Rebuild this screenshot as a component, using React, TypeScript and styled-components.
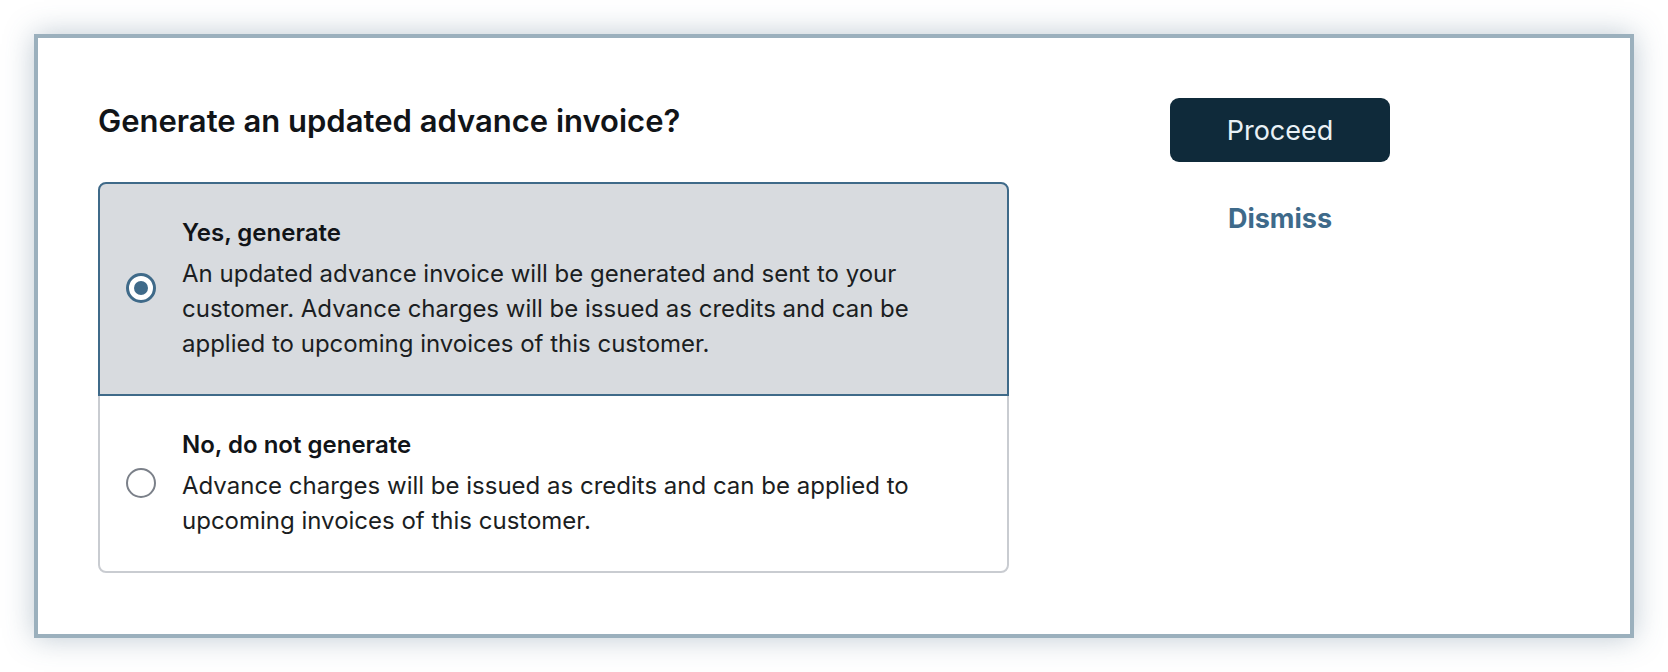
import React, { useState } from 'react';
import styled, { createGlobalStyle } from 'styled-components';

const GlobalStyle = createGlobalStyle`
  body {
    margin: 0;
    background: #ffffff;
    font-family: Inter, 'Noto Sans', sans-serif;
  }
`;

const Card = styled.div`
  margin: 34px;
  border: 4px solid #9bb0bd;
  background: #ffffff;
  box-shadow: 0 0 28px rgba(70, 100, 125, 0.35);
  padding: 60px 60px 61px 60px;
  display: flex;
  align-items: flex-start;
`;

const Main = styled.div`
  width: 911px;
`;

const Heading = styled.h2`
  margin: 0 0 38px 0;
  font-size: 31px;
  line-height: 46px;
  font-weight: 600;
  color: #111418;
`;

const Options = styled.div`
  display: flex;
  flex-direction: column;
`;

const Option = styled.label<{ $selected: boolean; $first?: boolean; $last?: boolean }>`
  position: relative;
  display: flex;
  align-items: center;
  gap: 26px;
  padding: 31px 40px 33px 26px;
  border: 2px solid ${(p) => (p.$selected ? '#3f6a89' : '#c9ccd1')};
  background: ${(p) => (p.$selected ? '#d8dbdf' : '#ffffff')};
  border-radius: ${(p) => (p.$first ? '8px 8px 0 0' : p.$last ? '0 0 8px 8px' : '0')};
  margin-top: ${(p) => (p.$first ? '0' : '-2px')};
  z-index: ${(p) => (p.$selected ? 1 : 0)};
  cursor: pointer;
`;

const Radio = styled.span<{ $checked: boolean }>`
  flex: none;
  width: 30px;
  height: 30px;
  box-sizing: border-box;
  border-radius: 50%;
  border: ${(p) => (p.$checked ? '3px solid #3f6a89' : '2px solid #7b8089')};
  background: #ffffff;
  display: flex;
  align-items: center;
  justify-content: center;
  &::after {
    content: '';
    display: ${(p) => (p.$checked ? 'block' : 'none')};
    width: 14px;
    height: 14px;
    border-radius: 50%;
    background: #3f6a89;
  }
`;

const HiddenInput = styled.input`
  position: absolute;
  opacity: 0;
  pointer-events: none;
`;

const Texts = styled.div`
  display: flex;
  flex-direction: column;
  gap: 6px;
`;

const Title = styled.div`
  font-size: 24px;
  line-height: 35px;
  font-weight: 600;
  color: #111418;
`;

const Description = styled.div`
  font-size: 24px;
  line-height: 35px;
  font-weight: 400;
  color: #1b1e22;
`;

const Actions = styled.div`
  margin-left: 161px;
  width: 220px;
  display: flex;
  flex-direction: column;
  align-items: center;
`;

const PrimaryButton = styled.button`
  width: 220px;
  height: 64px;
  border: none;
  border-radius: 9px;
  background: #0f2a3a;
  color: #e9f1f6;
  font-family: Inter, 'Noto Sans', sans-serif;
  font-size: 27px;
  font-weight: 400;
  cursor: pointer;
`;

const LinkButton = styled.button`
  margin-top: 41px;
  border: none;
  background: none;
  padding: 0;
  color: #3e6a8a;
  font-family: Inter, 'Noto Sans', sans-serif;
  font-size: 27px;
  line-height: 32px;
  font-weight: 700;
  cursor: pointer;
`;

const options = [
  {
    id: 'yes',
    title: 'Yes, generate',
    text: 'An updated advance invoice will be generated and sent to your customer. Advance charges will be issued as credits and can be applied to upcoming invoices of this customer.',
  },
  {
    id: 'no',
    title: 'No, do not generate',
    text: 'Advance charges will be issued as credits and can be applied to upcoming invoices of this customer.',
  },
];

const App: React.FC = () => {
  const [choice, setChoice] = useState('yes');
  return (
    <>
      <GlobalStyle />
      <Card>
        <Main>
          <Heading>Generate an updated advance invoice?</Heading>
          <Options>
            {options.map((o, i) => (
              <Option
                key={o.id}
                $selected={choice === o.id}
                $first={i === 0}
                $last={i === options.length - 1}
              >
                <HiddenInput
                  type="radio"
                  name="invoice"
                  checked={choice === o.id}
                  onChange={() => setChoice(o.id)}
                />
                <Radio $checked={choice === o.id} />
                <Texts>
                  <Title>{o.title}</Title>
                  <Description>{o.text}</Description>
                </Texts>
              </Option>
            ))}
          </Options>
        </Main>
        <Actions>
          <PrimaryButton type="button">Proceed</PrimaryButton>
          <LinkButton type="button">Dismiss</LinkButton>
        </Actions>
      </Card>
    </>
  );
};

export default App;
